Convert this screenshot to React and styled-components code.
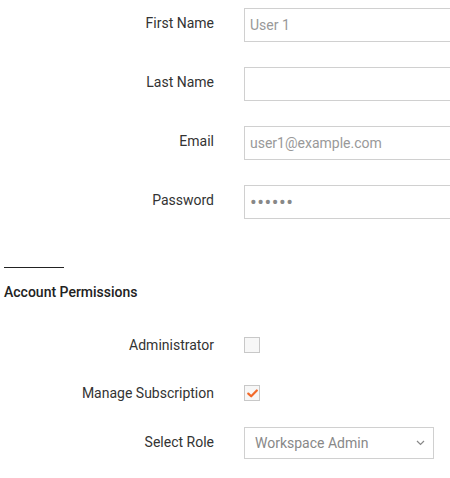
import React, { useState } from "react";
import styled, { createGlobalStyle } from "styled-components";

const GlobalStyle = createGlobalStyle`
  body {
    margin: 0;
    background: #fff;
    font-family: Roboto, "Liberation Sans", sans-serif;
    overflow: hidden;
  }
`;

const Page = styled.div`
  box-sizing: border-box;
  width: 100%;
  overflow: hidden;
  padding: 8px 0 12px 4px;
`;

const Row = styled.div`
  display: grid;
  grid-template-columns: 210px 1fr;
  column-gap: 30px;
  align-items: ${(p) => (p.center ? "center" : "start")};
  margin-bottom: ${(p) => (p.gap === undefined ? 25 : p.gap)}px;
`;

const Label = styled.label`
  text-align: right;
  font-size: 14px;
  color: #333;
  padding-top: ${(p) => p.offset || 0}px;
`;

const TextInput = styled.input`
  box-sizing: border-box;
  width: 240px;
  height: 34px;
  border: 1px solid #d0d0d0;
  border-radius: 0;
  padding: 0 5px;
  font-family: Roboto, "Liberation Sans", sans-serif;
  font-size: 14px;
  color: #888;
  outline: none;
  &::placeholder {
    color: #999;
  }
  &[type="password"] {
    font-size: 20px;
    letter-spacing: 0.5px;
  }
`;

const Divider = styled.hr`
  width: 60px;
  margin: 48px 0 0 0;
  border: none;
  border-top: 1px solid #222;
`;

const SectionTitle = styled.h3`
  margin: 16px 0 37px 0;
  font-size: 14px;
  font-weight: 500;
  color: #222;
`;

const Box = styled.span`
  box-sizing: border-box;
  display: flex;
  align-items: center;
  justify-content: center;
  width: 16px;
  height: 16px;
  border: 1px solid #c8c8c8;
  background: #f7f7f7;
  cursor: pointer;
`;

const SelectWrap = styled.div`
  position: relative;
  width: 190px;
`;

const Select = styled.select`
  box-sizing: border-box;
  width: 190px;
  height: 32px;
  border: 1px solid #d0d0d0;
  border-radius: 0;
  background: #fff;
  padding: 0 10px;
  appearance: none;
  font-family: Roboto, "Liberation Sans", sans-serif;
  font-size: 14px;
  color: #888;
  outline: none;
`;

const Chevron = styled.svg`
  position: absolute;
  right: 9px;
  top: 13px;
  pointer-events: none;
`;

const Checkbox = ({ checked, onToggle }) => (
  <Box onClick={onToggle}>
    {checked && (
      <svg width="11" height="9" viewBox="0 0 11 9">
        <path
          d="M1.3 4.6 L4.2 7.3 L9.8 1.5"
          fill="none"
          stroke="#f26a2a"
          strokeWidth="2.2"
          strokeLinecap="round"
          strokeLinejoin="round"
        />
      </svg>
    )}
  </Box>
);

const fields = [
  { id: "first", label: "First Name", placeholder: "User 1" },
  { id: "last", label: "Last Name", placeholder: "" },
  { id: "email", label: "Email", placeholder: "user1@example.com" },
  { id: "password", label: "Password", type: "password", value: "secret" },
];

const App = () => {
  const [admin, setAdmin] = useState(false);
  const [subs, setSubs] = useState(true);

  return (
    <Page>
      <GlobalStyle />
      {fields.map((f) => (
        <Row key={f.id}>
          <Label htmlFor={f.id} offset={7}>
            {f.label}
          </Label>
          <TextInput
            id={f.id}
            type={f.type || "text"}
            placeholder={f.placeholder}
            defaultValue={f.value}
          />
        </Row>
      ))}
      <Divider />
      <SectionTitle>Account Permissions</SectionTitle>
      <Row center gap={32}>
        <Label>Administrator</Label>
        <Checkbox checked={admin} onToggle={() => setAdmin(!admin)} />
      </Row>
      <Row center gap={26}>
        <Label>Manage Subscription</Label>
        <Checkbox checked={subs} onToggle={() => setSubs(!subs)} />
      </Row>
      <Row gap={0}>
        <Label htmlFor="role" offset={7}>
          Select Role
        </Label>
        <SelectWrap>
          <Select id="role" defaultValue="workspace-admin">
            <option value="workspace-admin">Workspace Admin</option>
            <option value="member">Member</option>
          </Select>
          <Chevron width="9" height="6" viewBox="0 0 9 6">
            <path d="M1 1 L4.5 4.5 L8 1" fill="none" stroke="#888" strokeWidth="1.2" />
          </Chevron>
        </SelectWrap>
      </Row>
    </Page>
  );
};

export default App;
